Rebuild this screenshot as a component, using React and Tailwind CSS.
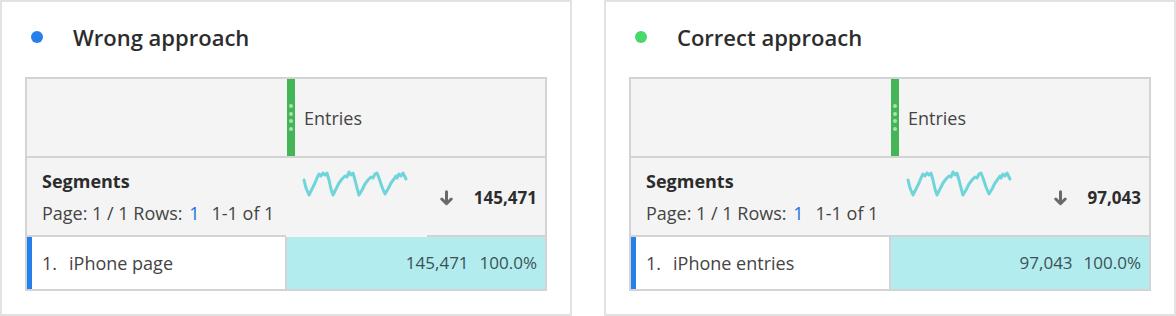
import React from "react";

const SPARK =
  "17,22 19,30 22,37 25,31 28,25 30,20 32,16 34,18 36,15 38,17 40,15 42,22 44,31 46,37 49,31 52,25 55,21 58,18 60,19 62,14 64,17 66,15 68,22 70,30 72,37 75,32 78,26 81,22 84,19 86,20 88,16 90,15 92,20 95,29 98,36 101,31 104,25 107,21 109,18 110,20 112,16 114,18 116,15 118,19 119,21";

function Sparkline() {
  return (
    <svg width="122" height="40" viewBox="0 0 122 40" className="shrink-0">
      <polyline
        points={SPARK}
        fill="none"
        stroke="#6fd5db"
        strokeWidth="3"
        strokeLinejoin="round"
        strokeLinecap="round"
      />
    </svg>
  );
}

function ArrowDown() {
  return (
    <svg width="13" height="16" viewBox="0 0 13 16">
      <path
        d="M6.5 1.8V13.5M1.8 9L6.5 13.7L11.2 9"
        fill="none"
        stroke="#6a6a6a"
        strokeWidth="3"
        strokeLinecap="round"
        strokeLinejoin="round"
      />
    </svg>
  );
}

function Panel({ dot, title, label, total, gap }) {
  return (
    <div className="w-[572px] h-[316px] shrink-0 border-2 border-[#e2e2e2] bg-white pt-[20px]">
      <div className="flex items-center h-[30px]">
        <span className={`ml-[29px] w-[12px] h-[12px] rounded-full ${dot}`} />
        <span className="ml-[30px] text-[22px] font-semibold leading-[30px] text-[#2c2c2c]">
          {title}
        </span>
      </div>

      <div className="mt-[25px] ml-[23px] w-[522px] border-2 border-[#d3d3d3] flex flex-col text-[#444444]">
        {/* header */}
        <div className="flex h-[77px] bg-[#f4f4f4]">
          <div className="w-[260px]" />
          <div className="w-[8px] bg-[#44b557] flex flex-col items-center justify-center gap-[3.5px]">
            <span className="w-[4px] h-[4px] rounded-full bg-[#a9dfb1]" />
            <span className="w-[4px] h-[4px] rounded-full bg-[#a9dfb1]" />
            <span className="w-[4px] h-[4px] rounded-full bg-[#a9dfb1]" />
            <span className="w-[4px] h-[4px] rounded-full bg-[#a9dfb1]" />
          </div>
          <div className="flex-1 flex items-center pl-[9px] text-[18px] leading-[24px]">
            Entries
          </div>
        </div>
        <div className="h-[2px] bg-[#d3d3d3]" />

        {/* summary */}
        <div className="flex h-[77px] bg-[#f4f4f4]">
          <div className="w-[260px] pl-[15px] pt-[12px]">
            <div className="text-[18px] font-bold leading-[23px] text-[#2c2c2c]">
              Segments
            </div>
            <div className="mt-[8px] text-[18px] leading-[24px] whitespace-nowrap">
              Page: 1 / 1 Rows: <span className="ml-[2px] text-[#1473e6]">1</span>
              <span className="ml-[12px]">1-1 of 1</span>
            </div>
          </div>
          <div className="flex-1 flex items-start pr-[8px]">
            <Sparkline />
            <div className="ml-auto mt-[29px] flex items-center h-[22px]">
              <ArrowDown />
              <span className="ml-[21px] text-[17px] font-bold leading-[22px] text-[#2c2c2c]">
                {total}
              </span>
            </div>
          </div>
        </div>
        {gap ? (
          <div className="flex h-[2px]">
            <div className="w-[259px] bg-[#d3d3d3]" />
            <div className="w-[141px] bg-[#f6f6f6]" />
            <div className="flex-1 bg-[#d3d3d3]" />
          </div>
        ) : (
          <div className="h-[2px] bg-[#d3d3d3]" />
        )}

        {/* data row */}
        <div className="flex h-[52px]">
          <div className="w-[260px] border-l-[5px] border-r-2 border-l-[#2680eb] border-r-[#d3d3d3] bg-white flex items-center pl-[10px] text-[18px] leading-[24px] whitespace-nowrap">
            <span>1.</span>
            <span className="ml-[12px]">{label}</span>
          </div>
          <div className="flex-1 bg-[#b3ecee] flex items-center justify-end gap-[11px] pr-[8px] text-[17px] leading-[24px] text-[#3a5254]">
            <span>{total}</span>
            <span>100.0%</span>
          </div>
        </div>
      </div>
    </div>
  );
}

export default function App() {
  return (
    <div
      className="w-[1176px] h-[316px] bg-white flex gap-[32px] overflow-hidden"
      style={{ fontFamily: '"Open Sans", "Noto Sans", sans-serif' }}
    >
      <Panel
        dot="bg-[#2680eb]"
        title="Wrong approach"
        label="iPhone page"
        total="145,471"
        gap
      />
      <Panel
        dot="bg-[#47d96b]"
        title="Correct approach"
        label="iPhone entries"
        total="97,043"
      />
    </div>
  );
}
